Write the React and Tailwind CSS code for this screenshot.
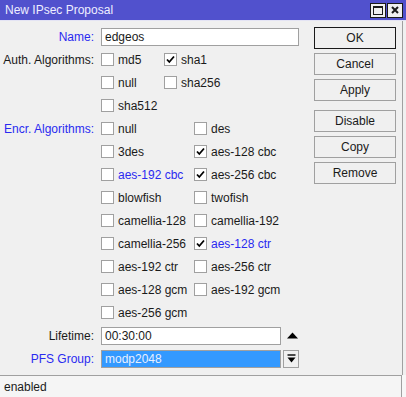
import React from 'react';

const Check = () => (
  <svg width="9" height="9" viewBox="0 0 9 9" className="block">
    <path d="M1 4.5 L3.3 7 L8 1.5" fill="none" stroke="#000" strokeWidth="1.8" />
  </svg>
);

const CheckItem = ({ label, checked, blue, width }) => (
  <div className={`flex items-center ${width || ''}`}>
    <div className="w-[13px] h-[13px] border border-[#a0a0a0] bg-white flex items-center justify-center shrink-0">
      {checked && <Check />}
    </div>
    <span className={`ml-[4px] ${blue ? 'text-[#2a2af0]' : 'text-[#1a1a1a]'}`}>{label}</span>
  </div>
);

const Row = ({ label, blue, children }) => (
  <div className="flex items-center h-[23px]">
    <div className={`w-[95px] shrink-0 text-right pr-[1px] ${blue ? 'text-[#2a2af0]' : 'text-[#1a1a1a]'}`}>
      {label}
    </div>
    <div className="ml-[6px] flex items-center">{children}</div>
  </div>
);

const Btn = ({ children, primary, className = '' }) => (
  <div
    className={`h-[22px] w-[82px] flex items-center justify-center bg-[#f0f0f0] text-[#1a1a1a] border ${
      primary ? 'border-[#1a1a1a]' : 'border-[#a0a0a0]'
    } ${className}`}
  >
    {children}
  </div>
);

const encr = [
  ['null', false, false, 'des', false, false],
  ['3des', false, false, 'aes-128 cbc', true, false],
  ['aes-192 cbc', false, true, 'aes-256 cbc', true, false],
  ['blowfish', false, false, 'twofish', false, false],
  ['camellia-128', false, false, 'camellia-192', false, false],
  ['camellia-256', false, false, 'aes-128 ctr', true, true],
  ['aes-192 ctr', false, false, 'aes-256 ctr', false, false],
  ['aes-128 gcm', false, false, 'aes-192 gcm', false, false],
  ['aes-256 gcm', false, false, null],
];

export default function App() {
  return (
    <div
      className="w-[406px] h-[397px] flex flex-col bg-[#f0f0f0] text-[12px] leading-none overflow-hidden"
      style={{ fontFamily: '"Liberation Sans", Arial, sans-serif' }}
    >
      {/* Title bar */}
      <div className="h-[20px] bg-[#5151cd] flex items-center pl-[5px] pr-[3px] shrink-0">
        <span className="text-[#eeeeff] text-[12px] flex-1">New IPsec Proposal</span>
        <div className="w-[16px] h-[15px] bg-[#f0f0f0] border border-[#1a1a1a] flex items-center justify-center">
          <div className="w-[10px] h-[9px] border-[1.5px] border-[#1a1a1a] border-t-2" />
        </div>
        <div className="ml-[1px] w-[16px] h-[15px] bg-[#f0f0f0] border border-[#1a1a1a] flex items-center justify-center">
          <svg width="8" height="8" viewBox="0 0 8 8">
            <path d="M1 1 L7 7 M7 1 L1 7" stroke="#1a1a1a" strokeWidth="2" />
          </svg>
        </div>
      </div>
      <div className="h-px bg-[#e4e4f4] shrink-0" />

      {/* Body */}
      <div className="flex-1 flex border-r border-[#a0a0a0] mr-[3px]">
        <div className="flex-1 flex flex-col pt-[4px]">
          <Row label="Name:" blue>
            <div className="w-[198px] h-[18px] bg-white border border-[#a0a0a0] flex items-center pl-[3px] text-[#1a1a1a]">
              edgeos
            </div>
          </Row>
          <Row label="Auth. Algorithms:">
            <CheckItem label="md5" width="w-[63px]" />
            <CheckItem label="sha1" checked />
          </Row>
          <Row label="">
            <CheckItem label="null" width="w-[63px]" />
            <CheckItem label="sha256" />
          </Row>
          <Row label="">
            <CheckItem label="sha512" />
          </Row>
          {encr.map((r, i) => (
            <Row key={i} label={i === 0 ? 'Encr. Algorithms:' : ''} blue>
              <CheckItem label={r[0]} checked={r[1]} blue={r[2]} width="w-[93px]" />
              {r[3] && <CheckItem label={r[3]} checked={r[4]} blue={r[5]} />}
            </Row>
          ))}
          <Row label="Lifetime:">
            <div className="w-[180px] h-[18px] bg-white border border-[#a0a0a0] flex items-center pl-[3px] text-[#1a1a1a]">
              00:30:00
            </div>
            <svg width="11" height="7" viewBox="0 0 11 7" className="ml-[6px]">
              <path d="M0 6.5 L5.5 0.5 L11 6.5 Z" fill="#000" />
            </svg>
          </Row>
          <Row label="PFS Group:" blue>
            <div className="w-[180px] h-[18px] bg-[#3399ff] border border-[#a0a0a0] flex items-center pl-[3px] text-[#e8f0ff]">
              modp2048
            </div>
            <div className="ml-[2px] w-[16px] h-[18px] bg-[#f0f0f0] border border-[#a0a0a0] flex items-center justify-center">
              <svg width="9" height="9" viewBox="0 0 9 9">
                <path d="M0.5 1 H8.5" stroke="#000" strokeWidth="1.4" />
                <path d="M0.5 3.5 H8.5 L4.5 8.5 Z" fill="#000" />
              </svg>
            </div>
          </Row>
        </div>

        <div className="w-[82px] mr-[6px] pt-[6px] flex flex-col gap-[4px]">
          <Btn primary>OK</Btn>
          <Btn>Cancel</Btn>
          <Btn>Apply</Btn>
          <Btn className="mt-[5px]">Disable</Btn>
          <Btn>Copy</Btn>
          <Btn>Remove</Btn>
        </div>
      </div>

      {/* Status bar */}
      <div className="h-[22px] shrink-0 flex">
        <div className="flex-1 bg-[#f5f5f5] border-t border-r border-[#a0a0a0] flex items-center pl-[4px] text-[#1a1a1a]">
          enabled
        </div>
        <div className="w-[4px] bg-[#f7f7f7]" />
      </div>
    </div>
  );
}
